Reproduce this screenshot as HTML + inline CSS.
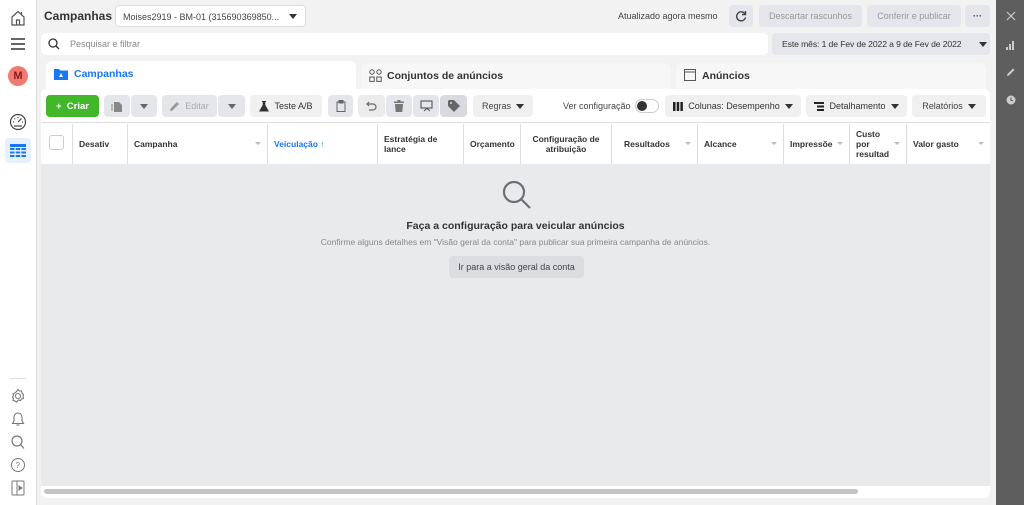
<!DOCTYPE html>
<html><head><meta charset="utf-8">
<style>
*{box-sizing:border-box;margin:0;padding:0}
body{width:1024px;height:505px;overflow:hidden;background:#f2f2f2;font-family:"Liberation Sans",sans-serif;font-size:9px;color:#1c1e21;position:relative}
.a{position:absolute}
.btn{position:absolute;background:#e4e6eb;border-radius:4px;display:flex;align-items:center;justify-content:center;color:#444;font-size:9px}
.dis{color:#999}
.tri{display:inline-block;width:0;height:0;border-left:4px solid transparent;border-right:4px solid transparent;border-top:5px solid #333}
.th{position:absolute;top:124px;height:40px;border-right:1px solid #ddd;display:flex;align-items:center;padding-left:6px;font-weight:bold;font-size:8.5px;line-height:10px;color:#333}
.srt{position:absolute;right:6px;top:18px;width:0;height:0;border-left:3px solid transparent;border-right:3px solid transparent;border-top:3px solid #bbb}
</style></head><body>
<div class="a" style="left:0;top:0;width:37px;height:505px;background:#fff;border-right:1px solid #ddd"></div>
<svg class="a" style="left:9px;top:9px" width="18" height="18" viewBox="0 0 18 18" fill="none" stroke="#555" stroke-width="1.2"><path d="M3 8 L9 2.5 L15 8 V16 H3 Z"/><path d="M7.5 16 V11 H10.5 V16"/><path d="M12.5 5 V3"/></svg>
<svg class="a" style="left:10px;top:37px" width="16" height="14" stroke="#333" stroke-width="1.4"><path d="M1 2H15M1 7H15M1 12H15"/></svg>
<div class="a" style="left:8px;top:66px;width:20px;height:20px;border-radius:50%;background:#f07a72;color:#8b1a1a;font-weight:bold;font-size:11px;display:flex;align-items:center;justify-content:center">M</div>
<svg class="a" style="left:9px;top:113px" width="18" height="18" viewBox="0 0 18 18" fill="none" stroke="#444" stroke-width="1.2"><circle cx="9" cy="9" r="7.5"/><path d="M9 9 L12 6"/><path d="M4 9H5M13 9H14M9 4V5M5.5 5.5l.7.7M12.5 5.5l-.7.7"/><path d="M5 13H13"/></svg>
<div class="a" style="left:5px;top:138px;width:26px;height:25px;background:#e7f0fd;border-radius:4px"></div>
<svg class="a" style="left:10px;top:144px" width="16" height="13"><rect x="0" y="0" width="16" height="3" fill="#1877f2"/><g fill="#1877f2"><rect x="0" y="4" width="4.5" height="2"/><rect x="5.7" y="4" width="4.5" height="2"/><rect x="11.4" y="4" width="4.6" height="2"/><rect x="0" y="7.5" width="4.5" height="2"/><rect x="5.7" y="7.5" width="4.5" height="2"/><rect x="11.4" y="7.5" width="4.6" height="2"/><rect x="0" y="11" width="4.5" height="2"/><rect x="5.7" y="11" width="4.5" height="2"/><rect x="11.4" y="11" width="4.6" height="2"/></g></svg>
<div class="a" style="left:10px;top:378px;width:16px;height:1px;background:#ddd"></div>
<svg class="a" style="left:10px;top:388px" width="16" height="16" fill="none" stroke="#777" stroke-width="1.1"><circle cx="8" cy="8" r="2.5"/><path d="M8 1.5l1.5 1.5h2l.5 2 1.5 1.5-.5 2 .5 2-2 .5-1 1.5-2-.5L6.5 14l-1.5-1-2-.5.5-2-1-1.5 1-1.5L3 5.5 5 5l1.5-1.5z"/></svg>
<svg class="a" style="left:10px;top:411px" width="16" height="16" fill="none" stroke="#777" stroke-width="1.1"><path d="M8 2c-2.5 0-4 2-4 4.5V10L2.5 12.5h11L12 10V6.5C12 4 10.5 2 8 2z"/><path d="M6.5 14h3"/></svg>
<svg class="a" style="left:10px;top:434px" width="16" height="16" fill="none" stroke="#777" stroke-width="1.2"><circle cx="7" cy="7" r="5"/><path d="M10.5 10.5L14 14.5"/></svg>
<svg class="a" style="left:10px;top:457px" width="16" height="16" fill="none" stroke="#777" stroke-width="1"><circle cx="8" cy="8" r="6.5"/><text x="5.5" y="11" font-size="8" fill="#777" stroke="none" font-family="Liberation Sans">?</text></svg>
<svg class="a" style="left:11px;top:480px" width="14" height="16" fill="none" stroke="#777" stroke-width="1"><rect x="1" y="1" width="12" height="14" rx="1"/><path d="M6 1V15"/><path d="M8 6l3 2-3 2z" fill="#777"/></svg>

<div class="a" style="left:996px;top:0;width:28px;height:505px;background:#5e5e5e"></div>
<svg class="a" style="left:1006px;top:11px" width="10" height="10" stroke="#ccc" stroke-width="1.2"><path d="M1 1L9 9M9 1L1 9"/></svg>
<svg class="a" style="left:1006px;top:40px" width="10" height="10" fill="#ccc"><rect x="0" y="7" width="2" height="3"/><rect x="3" y="4" width="2" height="6"/><rect x="6" y="1" width="2" height="9"/></svg>
<svg class="a" style="left:1006px;top:67px" width="10" height="10" fill="#ccc"><path d="M1 9L1.5 7 7 1.5 8.5 3 3 8.5z"/></svg>
<svg class="a" style="left:1006px;top:95px" width="10" height="10"><circle cx="5" cy="5" r="4.5" fill="#ccc"/><path d="M5 2.5V5.5H7" stroke="#5e5e5e" stroke-width="1" fill="none"/></svg>

<div class="a" style="left:44px;top:9px;font-size:12px;font-weight:bold;color:#333">Campanhas</div>
<div class="a" style="left:115px;top:5px;width:191px;height:22px;background:#fff;border:1px solid #ddd;border-radius:4px;font-size:9px;color:#444;padding:6px 0 0 7px">Moises2919 - BM-01 (315690369850...</div>
<div class="a tri" style="left:289px;top:14px"></div>
<div class="a" style="left:618px;top:11px;font-size:9px;color:#444">Atualizado agora mesmo</div>
<div class="btn" style="left:729px;top:5px;width:24px;height:22px"><svg width="12" height="12" fill="none" stroke="#444" stroke-width="1.4"><path d="M10 4A4.5 4.5 0 1 0 10.5 7.5"/><path d="M10.5 1V4.5H7"/></svg></div>
<div class="btn dis" style="left:759px;top:5px;width:103px;height:22px">Descartar rascunhos</div>
<div class="btn dis" style="left:867px;top:5px;width:94px;height:22px">Conferir e publicar</div>
<div class="btn" style="left:965px;top:5px;width:25px;height:22px;font-weight:bold;color:#444">···</div>

<div class="a" style="left:41px;top:33px;width:727px;height:22px;background:#fff;border-radius:5px"></div>
<svg class="a" style="left:48px;top:38px" width="12" height="12" fill="none" stroke="#333" stroke-width="1.3"><circle cx="5" cy="5" r="4"/><path d="M8 8L11 11"/></svg>
<div class="a" style="left:70px;top:39px;color:#888">Pesquisar e filtrar</div>
<div class="btn" style="left:772px;top:33px;width:218px;height:22px;justify-content:flex-start;padding-left:10px;color:#333;font-size:8.6px;letter-spacing:-0.1px">Este mês: 1 de Fev de 2022 a 9 de Fev de 2022</div>
<div class="a tri" style="left:979px;top:42px"></div>

<div class="a" style="left:46px;top:61px;width:310px;height:30px;background:#fff;border-radius:6px 6px 0 0"></div>
<svg class="a" style="left:54px;top:68px" width="14" height="12"><path d="M0 1H5L6.5 2.5H14V12H0Z" fill="#1877f2"/><path d="M7 5L5 9H9Z" fill="#fff"/></svg>
<div class="a" style="left:74px;top:68px;font-size:10.5px;font-weight:bold;color:#1877f2">Campanhas</div>
<div class="a" style="left:361px;top:63px;width:310px;height:30px;background:#f7f7f7;border-radius:6px 6px 0 0"></div>
<svg class="a" style="left:369px;top:69px" width="13" height="13" fill="none" stroke="#555" stroke-width="1"><circle cx="3" cy="3" r="2.2"/><circle cx="10" cy="3" r="2.2"/><rect x="0.8" y="8" width="4.4" height="4.4"/><rect x="7.8" y="8" width="4.4" height="4.4"/></svg>
<div class="a" style="left:387px;top:70px;font-size:10.5px;font-weight:bold;color:#333">Conjuntos de anúncios</div>
<div class="a" style="left:676px;top:63px;width:310px;height:30px;background:#f7f7f7;border-radius:6px 6px 0 0"></div>
<svg class="a" style="left:684px;top:69px" width="12" height="12" fill="none" stroke="#555" stroke-width="1"><rect x="0.5" y="0.5" width="11" height="11"/><path d="M0.5 3H11.5"/></svg>
<div class="a" style="left:702px;top:70px;font-size:10.5px;font-weight:bold;color:#333">Anúncios</div>

<div class="a" style="left:41px;top:89px;width:949px;height:409px;background:#fff;border-radius:6px"></div>
<div class="btn" style="left:46px;top:95px;width:53px;height:22px;background:#42b72a;color:#fff;font-weight:bold;font-size:9.5px">+&nbsp; Criar</div>
<div class="btn" style="left:104px;top:95px;width:26px;height:22px;background:#e4e6eb"><svg width="12" height="12" fill="#888"><path d="M3 2H8L11 5V12H3Z"/><path d="M1 4V11" stroke="#888"/></svg></div>
<div class="btn" style="left:131px;top:95px;width:26px;height:22px"><span class="tri" style="border-top-color:#666"></span></div>
<div class="btn" style="left:162px;top:95px;width:55px;height:22px;color:#aaa"><svg width="10" height="10" fill="#999" style="margin-right:5px"><path d="M0 10L.5 7.5 7 1 9 3 2.5 9.5z"/></svg>Editar</div>
<div class="btn" style="left:218px;top:95px;width:27px;height:22px"><span class="tri" style="border-top-color:#666"></span></div>
<div class="btn" style="left:250px;top:95px;width:72px;height:22px;background:#f0f0f0;color:#333"><svg width="10" height="11" fill="#333" style="margin-right:5px"><path d="M3 0H7V1H6.3V4L10 10.5H0L3.7 4V1H3Z"/></svg>Teste A/B</div>
<div class="btn" style="left:328px;top:95px;width:25px;height:22px"><svg width="10" height="12" fill="none" stroke="#666"><rect x="1" y="2" width="8" height="9.5"/><rect x="3" y="0.5" width="4" height="2.5" fill="#666"/></svg></div>
<div class="btn" style="left:358px;top:95px;width:27px;height:22px;background:#ebebeb"><svg width="12" height="10" fill="none" stroke="#666" stroke-width="1.2"><path d="M3 1L1 3L3 5M1 3H7A3 3 0 0 1 7 9H3"/></svg></div>
<div class="btn" style="left:386px;top:95px;width:26px;height:22px"><svg width="10" height="12" fill="#777"><rect x="0" y="1.5" width="10" height="1.5"/><rect x="3.5" y="0" width="3" height="2"/><path d="M1 4H9L8.3 12H1.7Z"/></svg></div>
<div class="btn" style="left:413px;top:95px;width:26px;height:22px"><svg width="13" height="12" fill="none" stroke="#555" stroke-width="1.1"><rect x="1" y="1" width="11" height="7"/><path d="M4 11L7 8.5 10 11" /></svg></div>
<div class="btn" style="left:440px;top:95px;width:27px;height:22px;background:#d8dadf"><svg width="12" height="12" fill="#666"><path d="M0 1V6L6 12 12 6 6 0H1Z"/><circle cx="3" cy="3" r="1" fill="#d8dadf"/></svg></div>
<div class="btn" style="left:473px;top:95px;width:60px;height:22px;background:#f0f0f0;color:#444">Regras&nbsp;&nbsp;<span class="tri"></span></div>
<div class="a" style="left:563px;top:101px;color:#444">Ver configuração</div>
<div class="a" style="left:635px;top:99px;width:24px;height:14px;border:1px solid #ccc;border-radius:7px;background:#fff"></div>
<div class="a" style="left:637px;top:101px;width:10px;height:10px;border-radius:50%;background:#333"></div>
<div class="btn" style="left:665px;top:95px;width:136px;height:22px;background:#f0f0f0;color:#333"><svg width="10" height="9" fill="#222" style="margin-right:5px"><rect x="0" y="0" width="2.5" height="9"/><rect x="3.7" y="0" width="2.5" height="9"/><rect x="7.4" y="0" width="2.5" height="9"/></svg>Colunas: Desempenho&nbsp;&nbsp;<span class="tri"></span></div>
<div class="btn" style="left:806px;top:95px;width:101px;height:22px;background:#f0f0f0;color:#333"><svg width="10" height="9" fill="#222" style="margin-right:5px"><rect x="0" y="0" width="10" height="2"/><rect x="3" y="3.5" width="7" height="2"/><rect x="3" y="7" width="7" height="2"/></svg>Detalhamento&nbsp;&nbsp;<span class="tri"></span></div>
<div class="btn" style="left:912px;top:95px;width:74px;height:22px;background:#f0f0f0;color:#444">Relatórios&nbsp;&nbsp;<span class="tri"></span></div>

<div class="a" style="left:41px;top:122px;width:949px;height:1px;background:#ddd"></div>
<div class="a" style="left:49px;top:135px;width:15px;height:15px;border:1px solid #ccc;border-radius:3px;background:#fff"></div>
<div class="th" style="left:41px;width:32px;padding:0"></div>
<div class="th" style="left:73px;width:55px">Desativ</div>
<div class="th" style="left:128px;width:140px">Campanha<span class="srt"></span></div>
<div class="th" style="left:268px;width:110px;color:#1877f2">Veiculação ↑</div>
<div class="th" style="left:378px;width:86px">Estratégia de<br>lance</div>
<div class="th" style="left:464px;width:57px">Orçamento</div>
<div class="th" style="left:521px;width:91px;justify-content:center;text-align:center;padding:0">Configuração de<br>atribuição</div>
<div class="th" style="left:612px;width:86px;padding-left:12px">Resultados<span class="srt"></span></div>
<div class="th" style="left:698px;width:86px">Alcance<span class="srt"></span></div>
<div class="th" style="left:784px;width:66px">Impressõe<span class="srt"></span></div>
<div class="th" style="left:850px;width:57px">Custo<br>por<br>resultad<span class="srt"></span></div>
<div class="th" style="left:907px;width:83px;border:none">Valor gasto<span class="srt"></span></div>

<div class="a" style="left:41px;top:164px;width:949px;height:322px;background:#e9eaec"></div>
<svg class="a" style="left:501px;top:179px" width="32" height="32" fill="none" stroke="#6b7077" stroke-width="2.2"><circle cx="13" cy="13" r="10"/><path d="M20.5 20.5L29 29"/></svg>
<div class="a" style="left:0;width:1031px;top:220px;text-align:center;font-size:10.5px;font-weight:bold;color:#333">Faça a configuração para veicular anúncios</div>
<div class="a" style="left:0;width:1031px;top:237px;text-align:center;font-size:8.5px;color:#888">Confirme alguns detalhes em "Visão geral da conta" para publicar sua primeira campanha de anúncios.</div>
<div class="btn" style="left:449px;top:256px;width:135px;height:22px;background:#dcdde0;color:#444">Ir para a visão geral da conta</div>

<div class="a" style="left:44px;top:489px;width:814px;height:5px;background:#c4c4c4;border-radius:3px"></div>
</body></html>
